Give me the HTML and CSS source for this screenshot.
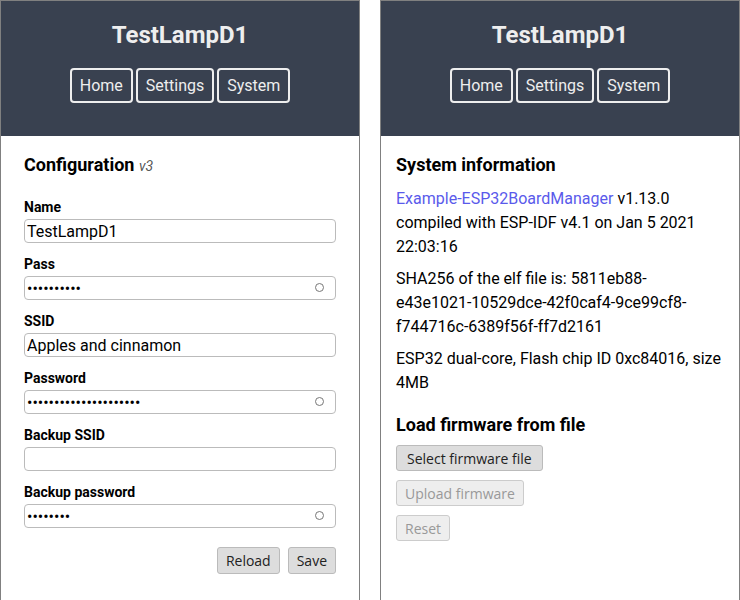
FILE: index.html
```html
<!DOCTYPE html>
<html>
    <head>
        <meta charset="UTF-8">
        <title>TestLampD1</title>
        <link rel="stylesheet" href="styles.css">
    </head>
    <body>
        <div class="page">
            <div class="panel">
                <div class="head">
                    <h1>TestLampD1</h1>
                    <ul class="nav">
                        <li>Home</li>
                        <li>Settings</li>
                        <li>System</li>
                    </ul>
                </div>
                <form class="body config">
                    <h2>Configuration <em>v3</em></h2>
                    <div class="field">
                        <label>Name</label>
                        <input type="text" value="TestLampD1">
                    </div>
                    <div class="field">
                        <label>Pass</label>
                        <div class="pw">
                            <input type="password" value="0123456789">
                            <span class="eye"></span>
                        </div>
                    </div>
                    <div class="field">
                        <label>SSID</label>
                        <input type="text" value="Apples and cinnamon">
                    </div>
                    <div class="field">
                        <label>Password</label>
                        <div class="pw">
                            <input type="password" value="012345678901234567890">
                            <span class="eye"></span>
                        </div>
                    </div>
                    <div class="field">
                        <label>Backup SSID</label>
                        <input type="text" value="">
                    </div>
                    <div class="field">
                        <label>Backup password</label>
                        <div class="pw">
                            <input type="password" value="01234567">
                            <span class="eye"></span>
                        </div>
                    </div>
                    <div class="actions">
                        <button type="button">Reload</button>
                        <button type="button">Save</button>
                    </div>
                </form>
            </div>
            <div class="panel">
                <div class="head">
                    <h1>TestLampD1</h1>
                    <ul class="nav">
                        <li>Home</li>
                        <li>Settings</li>
                        <li>System</li>
                    </ul>
                </div>
                <div class="body sys">
                    <h2>System information</h2>
                    <p><a href="#">Example-ESP32BoardManager</a> v1.13.0 compiled with ESP-IDF v4.1 on Jan 5 2021 22:03:16</p>
                    <p>SHA256 of the elf file is: 5811eb88-<br>e43e1021-10529dce-42f0caf4-9ce99cf8-<br>f744716c-6389f56f-ff7d2161</p>
                    <p>ESP32 dual-core, Flash chip ID 0xc84016, size 4MB</p>
                    <h2 class="load">Load firmware from file</h2>
                    <div class="stack">
                        <button type="button" class="wide">Select firmware file</button>
                        <button type="button" disabled>Upload firmware</button>
                        <button type="button" disabled>Reset</button>
                    </div>
                </div>
            </div>
        </div>
    </body>
</html>
```

FILE: styles.css
```css
body{margin:0;font-family:Roboto,"Liberation Sans",sans-serif;color:#000;}
h1,h2,p,ul,li{margin:0;padding:0;list-style:none;}

.page{
    display:flex;
    gap:20px;
}
.panel{
    width:358px;
    min-height:640px;
    border:1px solid #808080;
    border-bottom:none;
}
.head{
    height:135px;
    background-color:#394150;
    color:#eeeeee;
    text-align:center;
}
.head h1{
    padding-top:20px;
    font-size:24px;
    line-height:28px;
    font-weight:bold;
}
.nav{
    display:flex;
    justify-content:center;
    gap:3px;
    margin-top:19px;
}
.nav li{
    height:31px;
    padding:0 8px;
    border:2px solid #eeeeee;
    border-radius:4px;
    font-size:16px;
    line-height:32px;
}

.body h2{
    font-size:18px;
    line-height:21px;
    font-weight:bold;
}
.body h2 em{
    font-size:14px;
    font-weight:normal;
    color:#555555;
}
.config{
    display:block;
    margin:0;
    padding:18px 23px 0;
}
.config h2{margin-bottom:22px;}
.field{
    margin-bottom:13px;
}
.field label{
    display:block;
    font-size:14px;
    line-height:17px;
    font-weight:bold;
    margin-bottom:3px;
}
.field input{
    display:block;
    box-sizing:border-box;
    width:100%;
    height:24px;
    margin:0;
    padding:0 2px;
    border:1px solid #bbbbbb;
    border-radius:4px;
    font-family:Roboto,sans-serif;
    font-size:16px;
    color:#000;
    outline:none;
}
.pw{position:relative;}
.eye{
    position:absolute;
    top:7px;
    right:12px;
    width:7px;
    height:7px;
    border:1.5px solid #777777;
    border-radius:50%;
}
.actions{
    display:flex;
    justify-content:flex-end;
    gap:8px;
    margin-top:19px;
}

button{
    height:27px;
    padding:0 8px;
    background-color:#dddddd;
    border:1px solid #bbbbbb;
    border-radius:3px;
    font-family:"Open Sans","DejaVu Sans",sans-serif;
    font-size:14px;
    color:#222222;
}
button.wide{padding:0 10px;}
button:disabled{
    background-color:#eeeeee;
    border-color:#cccccc;
    color:#999999;
}

.sys{
    padding:18px 15px 0;
}
.sys p{
    margin:8px 0;
    font-size:16px;
    line-height:24px;
}
.sys h2 + p{margin-top:12px;}
.sys a{color:#5a5aeb;text-decoration:none;}
.sys h2.load{margin-top:19px;}
.stack{
    display:flex;
    flex-direction:column;
    align-items:flex-start;
    gap:9px;
    margin-top:10px;
}
.stack button{height:26px;}
```
